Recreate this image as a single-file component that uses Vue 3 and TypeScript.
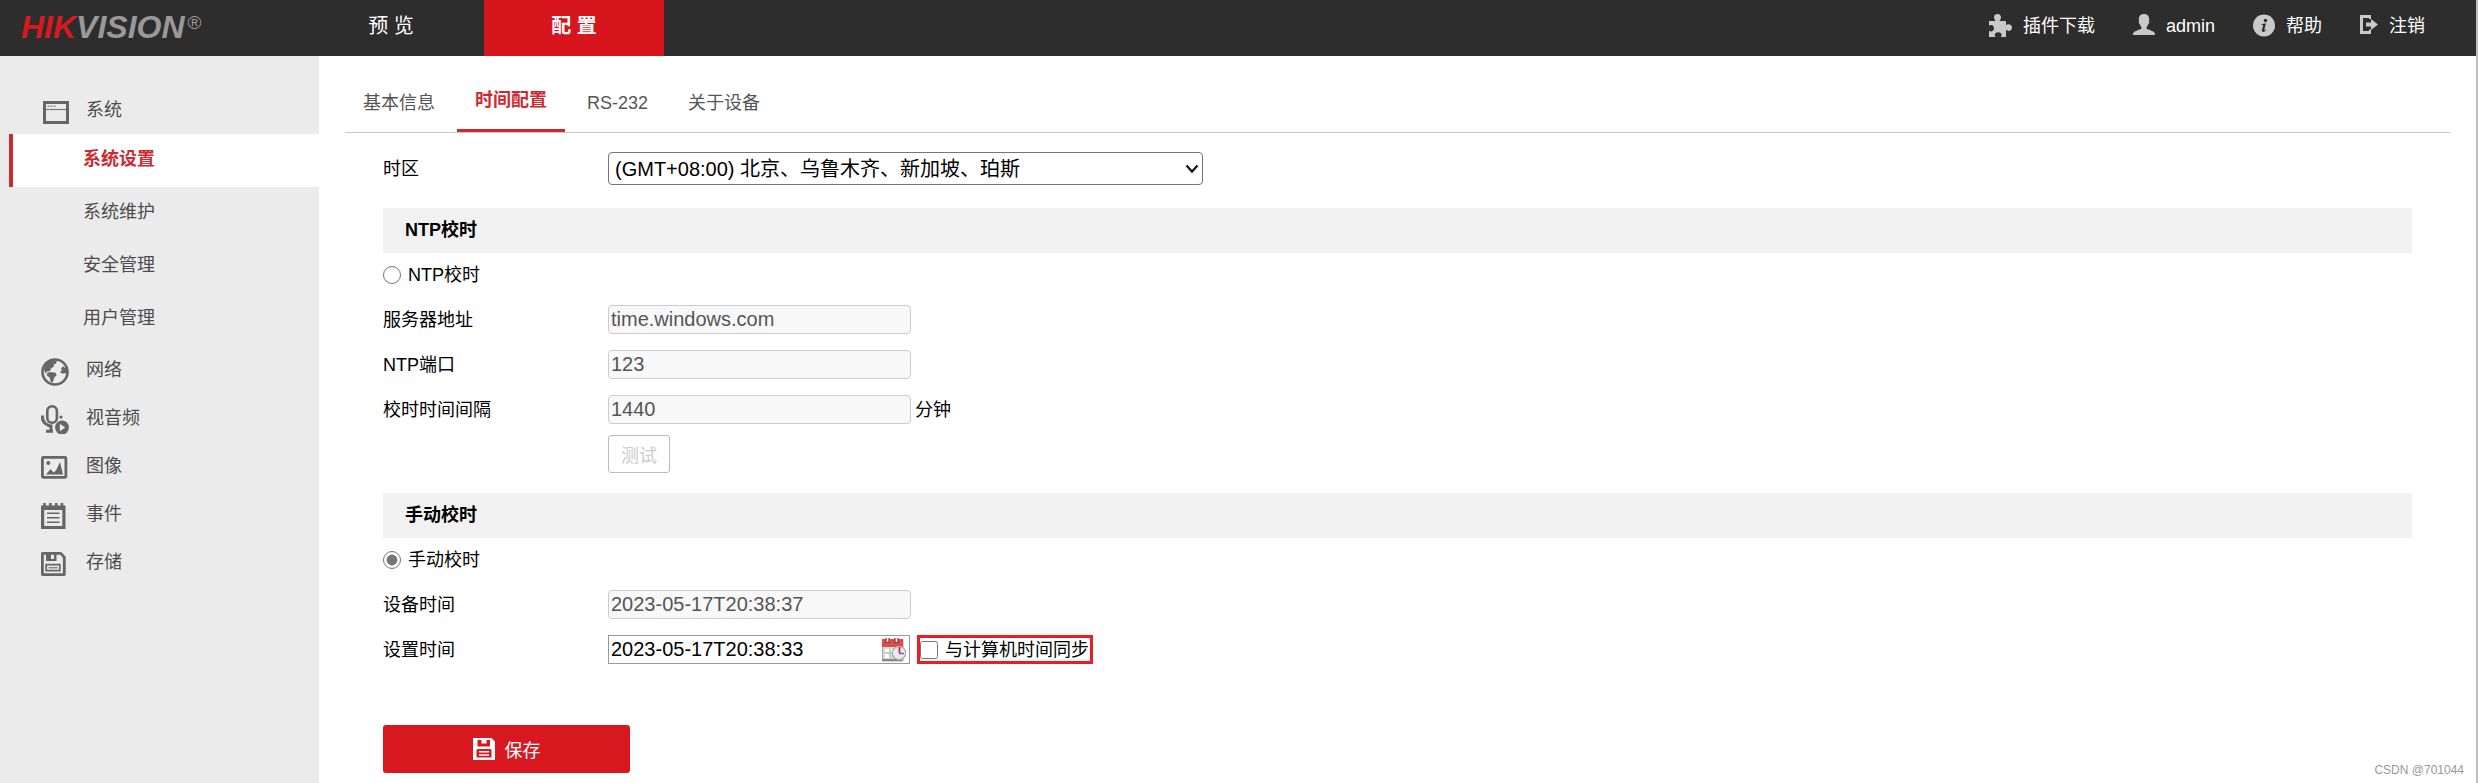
<script setup lang="ts">
import { ref } from 'vue'

interface MenuEntry {
  name: string
  icon: string
}

const subMenu: string[] = ['系统设置', '系统维护', '安全管理', '用户管理']
const activeSub = ref('系统设置')

const mainMenu: MenuEntry[] = [
  { name: '网络', icon: 'globe' },
  { name: '视音频', icon: 'mic' },
  { name: '图像', icon: 'image' },
  { name: '事件', icon: 'event' },
  { name: '存储', icon: 'disk' },
]

const tabs: string[] = ['基本信息', '时间配置', 'RS-232', '关于设备']
const activeTab = ref('时间配置')

const mode = ref('manual')
const zone = ref('gmt8')
const server = ref('time.windows.com')
const port = ref('123')
const interval = ref('1440')
const deviceTime = ref('2023-05-17T20:38:37')
const setTime = ref('2023-05-17T20:38:33')
const syncPc = ref(false)
</script>

<template>
  <div class="page">
    <header class="topbar">
      <a class="logo" href="#"><span class="logo-red">HIK</span>VISION<span class="reg">®</span></a>
      <nav class="main-nav">
        <a href="#" class="nav-item">预 览</a>
        <a href="#" class="nav-item active">配 置</a>
      </nav>
      <div class="tools">
        <a href="#" class="tool">
          <svg width="23" height="23" viewBox="0 0 23 23" fill="#c9c9c9">
            <path d="M0 7h6.500C5.500 5.500 5 4.500 5 3.300 5 1.200 6.600 0 8.500 0S12 1.200 12 3.300c0 1.200-.5 2.200-1.500 3.700H17v4.300c1-.8 1.700-1.100 2.600-1.100 2 0 3.400 1.400 3.400 3.300s-1.400 3.400-3.400 3.400c-.9 0-1.600-.3-2.600-1.100V23h-5.200c.6-.9.800-1.400.8-2.100 0-1.600-1.500-2.700-3.400-2.700s-3.400 1.100-3.400 2.700c0 .7.200 1.200.8 2.100H0v-6.300c.9.600 1.400.8 2.100.8 1.700 0 2.900-1.500 2.900-3.300s-1.200-3.300-2.900-3.300c-.7 0-1.200.2-2.100.8z" />
          </svg>
          <span>插件下载</span>
        </a>
        <a href="#" class="tool">
          <svg width="22" height="23" viewBox="0 0 22 23" fill="#c9c9c9">
            <path d="M11 0c3.400 0 5.200 2.200 5.200 5.400 0 1-.2 1.700-.2 2.200.5.500.2 2-.6 2.400-.4 1.300-1 2.300-1.800 3v1.800c1.500 1.200 8.400 2 8.400 5.400V21H0v-.8c0-3.400 6.900-4.200 8.400-5.400V13c-.8-.7-1.400-1.700-1.800-3-.8-.4-1.100-1.900-.6-2.400 0-.5-.2-1.200-.2-2.200C5.800 2.200 7.600 0 11 0z" />
          </svg>
          <span>admin</span>
        </a>
        <a href="#" class="tool">
          <svg width="22" height="23" viewBox="0 0 22 23">
            <circle cx="11" cy="11.500" r="11" fill="#c9c9c9" />
            <circle cx="12.500" cy="6.500" r="1.700" fill="#2d2d2d" />
            <path d="M8.300 10.200c1.600-.3 3.200-.8 4.700-1l-1.700 6.600c-.2.800.3.900 1.500-.3l.5.500c-1.800 2.400-5 2.700-4.400.1l1.200-4.600c.1-.6-.2-.7-1.800-.7z" fill="#2d2d2d" />
          </svg>
          <span>帮助</span>
        </a>
        <a href="#" class="tool">
          <svg width="18" height="23" viewBox="0 0 18 23" fill="#c9c9c9">
            <path d="M0 1h11v4H9V4H3v13h6v-1.500h2V20H0z" />
            <path d="M6 8.500h5V5l7 5.500-7 5.500v-3.500H6z" />
          </svg>
          <span>注销</span>
        </a>
      </div>
    </header>

    <div class="body">
      <aside class="sidebar">
        <a href="#" class="menu-row">
          <svg class="menu-icon" viewBox="0 0 28 32">
            <rect x="3.500" y="8.500" width="23" height="20" fill="none" stroke="#666" stroke-width="3" />
            <path d="M5 15.500h20" stroke="#777" stroke-width="1.200" />
            <path d="M6.500 12.200h2M9.500 12.200h2M12.500 12.200h2" stroke="#888" stroke-width="1.600" />
          </svg>
          <span>系统</span>
        </a>
        <a
          v-for="item in subMenu"
          :key="item"
          href="#"
          class="sub-row"
          :class="{ active: item === activeSub }"
          @click.prevent="activeSub = item"
        >{{ item }}</a>
        <a v-for="entry in mainMenu" :key="entry.name" href="#" class="menu-row">
          <svg v-if="entry.icon === 'globe'" class="menu-icon" viewBox="0 0 28 32">
            <circle cx="14" cy="18" r="12.500" fill="none" stroke="#666" stroke-width="2.600" />
            <path d="M3 15c1.500-5 5-8.500 9.500-9l3.300 1.200-.9 2.600-2.400.6.500 2-2.600 1.600-1.800 3.200-2.600.2-1.600 2.400zM6 19.300l3-1.300 5.500.8 1.300 2.200-2.300 2.200-1.700 4.800-2 .3-1-4.500-3-2.500zM26 13.500l-2 .2-2.200-1.400-1.700 2.200.8 1.800-2 1.700 2.500 1.800 2.600-.7 2 1.400z" fill="#666" />
          </svg>
          <svg v-else-if="entry.icon === 'mic'" class="menu-icon" viewBox="0 0 28 32">
            <rect x="6.300" y="4.300" width="9.600" height="16.500" rx="4.800" fill="none" stroke="#666" stroke-width="2.600" />
            <path d="M1.500 13.500v2c0 5 4.500 8.500 10 8.800M10 24v4.500M5 29.200h7" fill="none" stroke="#666" stroke-width="3" />
            <circle cx="20" cy="15" r="1.600" fill="#666" />
            <circle cx="21" cy="25.500" r="6.900" fill="#666" />
            <path d="M18.800 21.700v7.600l5.400-3.800z" fill="#ebebeb" />
          </svg>
          <svg v-else-if="entry.icon === 'image'" class="menu-icon" viewBox="0 0 28 32">
            <rect x="1.400" y="7.400" width="23.500" height="20" rx="1" fill="none" stroke="#666" stroke-width="2.800" />
            <circle cx="7.300" cy="13" r="2" fill="#666" />
            <path d="M5 24.500l4.500-5.500 3 3.500 2.500-2 4-8.500 3 12.500z" fill="#666" />
          </svg>
          <svg v-else-if="entry.icon === 'event'" class="menu-icon" viewBox="0 0 28 32">
            <path d="M0 7.500h24.500V31H0zM3.200 12v16h18.100V12z" fill="#666" fill-rule="evenodd" />
            <path d="M3.500 5v4M9.300 5v4M15.200 5v4M21 5v4" stroke="#666" stroke-width="2.600" />
            <path d="M6 15.300h12.500M6 19.800h12.500M6 24.300h12.500" stroke="#666" stroke-width="1.600" />
          </svg>
          <svg v-else class="menu-icon" viewBox="0 0 28 32">
            <path d="M1.400 7.400h18.300l3.600 3.800v17.400H1.400z" fill="none" stroke="#666" stroke-width="2.800" stroke-linejoin="round" />
            <path d="M5 6h10.500v9H5zM10 8v5h3V8z" fill="#666" fill-rule="evenodd" />
            <path d="M5.200 18.700h13.600v6H5.200z" fill="none" stroke="#666" stroke-width="1.700" />
            <path d="M7.500 21.700h9" stroke="#888" stroke-width="1.500" />
          </svg>
          <span>{{ entry.name }}</span>
        </a>
      </aside>

      <main class="content">
        <nav class="tabs">
          <a
            v-for="tab in tabs"
            :key="tab"
            href="#"
            class="tab"
            :class="{ active: tab === activeTab }"
            @click.prevent="activeTab = tab"
          >{{ tab }}</a>
        </nav>

        <form class="form" @submit.prevent>
          <div class="row zone">
            <label class="label" for="zone">时区</label>
            <div class="select-wrap">
              <select id="zone" v-model="zone" class="select">
                <option value="gmt8">(GMT+08:00) 北京、乌鲁木齐、新加坡、珀斯</option>
              </select>
              <svg class="chevron" width="14" height="10" viewBox="0 0 14 10">
                <path d="M1.500 1.500L7 7.500l5.500-6" fill="none" stroke="#111" stroke-width="2.200" />
              </svg>
            </div>
          </div>

          <h2 class="section first">NTP校时</h2>
          <div class="row">
            <label class="choice"><input v-model="mode" type="radio" name="mode" value="ntp" />NTP校时</label>
          </div>
          <div class="row">
            <label class="label" for="server">服务器地址</label>
            <input id="server" v-model="server" class="text" type="text" disabled />
          </div>
          <div class="row">
            <label class="label" for="port">NTP端口</label>
            <input id="port" v-model="port" class="text" type="text" disabled />
          </div>
          <div class="row">
            <label class="label" for="interval">校时时间间隔</label>
            <input id="interval" v-model="interval" class="text" type="text" disabled />
            <span class="unit">分钟</span>
          </div>
          <div class="row indent">
            <button class="test" type="button" disabled>测试</button>
          </div>

          <h2 class="section">手动校时</h2>
          <div class="row">
            <label class="choice"><input v-model="mode" type="radio" name="mode" value="manual" />手动校时</label>
          </div>
          <div class="row">
            <label class="label" for="device-time">设备时间</label>
            <input id="device-time" v-model="deviceTime" class="text" type="text" disabled />
          </div>
          <div class="row">
            <label class="label" for="set-time">设置时间</label>
            <div class="date-field">
              <input id="set-time" v-model="setTime" type="text" />
              <button class="picker" type="button" aria-label="选择时间">
                <svg width="24" height="25" viewBox="0 0 24 25">
                  <rect x="0.500" y="3" width="20.500" height="21" fill="#d5dad9" stroke="#aaa" stroke-width="1" />
                  <path d="M0 2h21v8H0z" fill="#dd4b48" />
                  <path d="M3 12h4v3H3zM9 12h4v3H9zM3 17h4v4H3z" fill="#fff" />
                  <path d="M8 12v9M3 16h9" stroke="#a5cdbd" stroke-width="1" />
                  <path d="M0 23h20" stroke="#888" stroke-width="2" />
                  <path d="M4 1v4.500h3V1M13 1v4.500h3V1" fill="#eee" stroke="#8d3634" stroke-width="1.200" />
                  <circle cx="17" cy="16" r="6.700" fill="#e9e9ef" stroke="#aaa" stroke-width="1.200" />
                  <path d="M17.500 10v6" stroke="#e02222" stroke-width="1.800" />
                  <path d="M17 16.500h5" stroke="#3a6fd0" stroke-width="1.400" />
                </svg>
              </button>
            </div>
            <label class="sync"><input v-model="syncPc" type="checkbox" />与计算机时间同步</label>
          </div>

          <button class="save" type="submit">
            <svg width="22" height="22" viewBox="0 0 22 22">
              <path d="M0 0h18.500L22 3.500V22H0zM4.500 2v6.500h12.500V2h-3.500v3.500h-5V2zM3.500 12v7.500h15V12l-1-1h-13z" fill="#fff" fill-rule="evenodd" />
              <path d="M6 13.800h10M6 17h10" stroke="#fff" stroke-width="1.600" />
            </svg>
            <span>保存</span>
          </button>
        </form>
      </main>
    </div>
    <span class="watermark">CSDN @701044</span>
  </div>
</template>

<style>
body {
  margin: 0;
  background: #fff;
}
</style>

<style scoped>
.page,
.page * {
  box-sizing: border-box;
}

.page {
  position: relative;
  display: flex;
  flex-direction: column;
  min-height: 100vh;
  margin-right: 1px;
  border-right: 2px solid #bfbfbf;
  font-family: "Liberation Sans", "Noto Sans CJK SC", sans-serif;
  font-size: 18px;
  line-height: 24px;
  color: #000;
}

a {
  text-decoration: none;
}

input,
select,
button {
  margin: 0;
  font-family: inherit;
}

.topbar {
  display: flex;
  height: 56px;
  background: #2d2d2d;
}

.logo {
  display: flex;
  flex: none;
  width: 301px;
  padding: 10px 0 0 21px;
  font-size: 32px;
  line-height: 34px;
  font-weight: bold;
  font-style: italic;
  color: #999;
}

.logo-red {
  color: #d71920;
}

.reg {
  margin-left: 3px;
  font-size: 19px;
  line-height: 26px;
  font-weight: normal;
  font-style: normal;
}

.main-nav {
  display: flex;
  gap: 3px;
}

.nav-item {
  width: 180px;
  padding-top: 12px;
  font-size: 20px;
  line-height: 28px;
  text-align: center;
  color: #fff;
}

.nav-item.active {
  background: #d7151d;
  font-weight: bold;
}

.tools {
  display: flex;
  gap: 38px;
  margin-left: auto;
  padding: 14px 51px 0 0;
}

.tool {
  display: flex;
  gap: 11px;
  align-items: flex-start;
  color: #fff;
}

.body {
  display: flex;
  flex: 1;
}

.sidebar {
  flex: none;
  width: 319px;
  padding-top: 30px;
  background: #ebebeb;
}

.menu-row {
  display: flex;
  align-items: center;
  gap: 17px;
  height: 48px;
  padding-left: 41px;
  color: #4c4c4c;
}

.menu-icon {
  width: 28px;
  height: 32px;
}

.sub-row {
  display: block;
  height: 53px;
  margin-left: 9px;
  padding: 13px 0 0 70px;
  border-left: 4px solid transparent;
  color: #4c4c4c;
}

.sub-row.active {
  border-left-color: #cd2a30;
  background: #fff;
  font-weight: bold;
  color: #cd2a30;
}

.content {
  flex: 1;
  padding: 17px 26px 10px;
}

.tabs {
  display: flex;
  gap: 4px;
  height: 60px;
  border-bottom: 1px solid #c8c8c8;
}

.tab {
  padding: 18px 18px 0;
  color: #555;
}

.tab.active {
  padding-top: 15px;
  border-bottom: 3px solid #cd2a30;
  font-weight: bold;
  color: #cd2a30;
}

.form {
  padding: 13px 38px 0;
}

.row {
  display: flex;
  align-items: center;
  height: 45px;
  padding-bottom: 2px;
}

.row.zone {
  padding-bottom: 0;
}

.label {
  width: 225px;
}

.row.indent {
  align-items: flex-start;
  padding: 2px 0 0 225px;
}

.select-wrap {
  position: relative;
  width: 595px;
}

.select {
  display: block;
  width: 100%;
  height: 33px;
  padding: 0 24px 0 6px;
  border: 1px solid #767676;
  border-radius: 4px;
  appearance: none;
  background: #fff;
  font-size: 20px;
  color: #000;
}

.chevron {
  position: absolute;
  top: 12px;
  right: 4px;
  pointer-events: none;
}

.section {
  height: 45px;
  margin: 15px 0 0;
  padding: 10px 22px 0;
  background: #f1f1f1;
  font-size: 18px;
  line-height: 24px;
  font-weight: bold;
}

.section.first {
  margin-top: 17px;
}

.choice {
  display: flex;
  align-items: center;
  gap: 7px;
}

.choice input,
.sync input {
  width: 18px;
  height: 18px;
  accent-color: #767676;
}

.text {
  width: 303px;
  height: 29px;
  padding: 0 2px;
  border: 1px solid #ccc;
  border-radius: 4px;
  background: #f8f8f8;
  font-size: 20px;
  color: #555;
}

.unit {
  margin-left: 4px;
}

.test {
  width: 62px;
  height: 38px;
  padding: 0;
  border: 1px solid #bbb;
  border-radius: 3px;
  background: #fff;
  font-size: 18px;
  color: #ccc;
}

.date-field {
  display: flex;
  align-items: center;
  width: 302px;
  height: 29px;
  padding: 0 3px 0 2px;
  border: 1px solid #999;
}

.date-field input {
  flex: 1;
  min-width: 0;
  height: 27px;
  padding: 0;
  border: 0;
  outline: 0;
  background: transparent;
  font-size: 20px;
  color: #000;
}

.picker {
  display: flex;
  padding: 0;
  border: 0;
  background: none;
}

.sync {
  display: flex;
  align-items: center;
  gap: 7px;
  height: 29px;
  margin-left: 7px;
  padding-right: 1px;
  border: 3px solid #ed1c24;
}

.save {
  display: flex;
  justify-content: center;
  align-items: center;
  gap: 10px;
  width: 247px;
  height: 48px;
  margin-top: 52px;
  border: 0;
  border-radius: 3px;
  background: #d7191f;
  font-size: 18px;
  color: #fff;
}

.watermark {
  position: absolute;
  right: 12px;
  bottom: 5px;
  font-size: 12px;
  line-height: 16px;
  color: #999;
}
</style>
